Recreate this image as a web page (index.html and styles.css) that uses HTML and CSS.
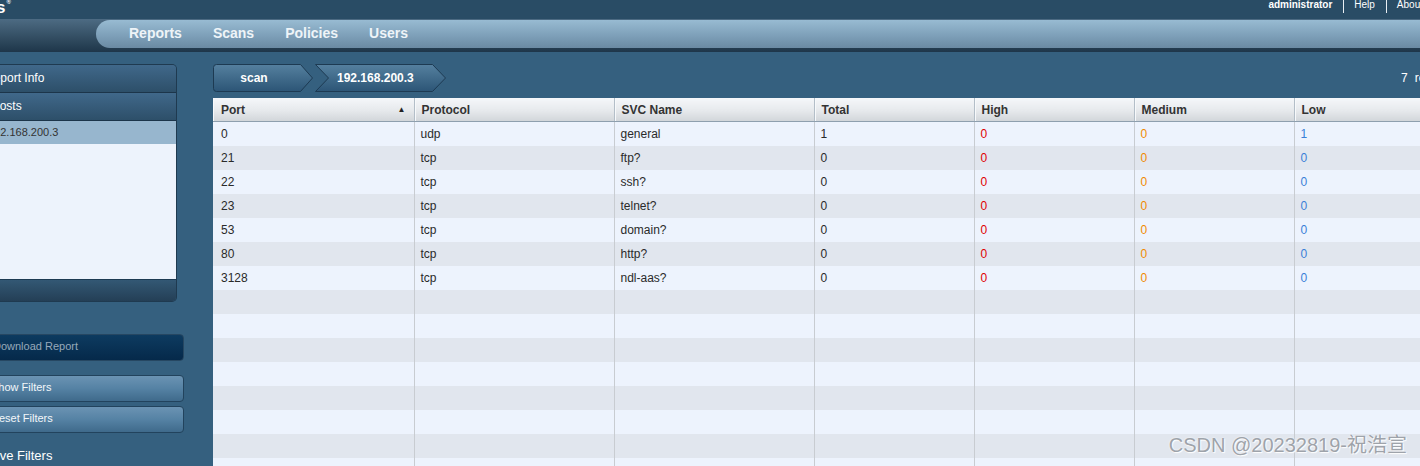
FILE: index.html
```html
<!DOCTYPE html>
<html>
<head>
<meta charset="utf-8">
<link rel="stylesheet" href="styles.css">
</head>
<body>
<header class="topbar">
  <div class="logo">Nessus<sup>®</sup></div>
  <nav class="user-links">
    <a class="ulink strong">administrator</a>
    <a class="ulink sep">Help</a>
    <a class="ulink sep">About</a>
  </nav>
</header>
<div class="navbar">
  <div class="nav-left"></div>
  <div class="nav-pill">
    <a class="nav-item">Reports</a>
    <a class="nav-item">Scans</a>
    <a class="nav-item">Policies</a>
    <a class="nav-item">Users</a>
  </div>
</div>
<main class="page">
  <aside class="sidebar">
    <div class="panel">
      <div class="panel-head first">Report Info</div>
      <div class="panel-head hosts">Hosts</div>
      <div class="host-row selected">192.168.200.3</div>
      <div class="host-list"></div>
      <div class="panel-foot"></div>
    </div>
    <button class="btn btn-dark">Download Report</button>
    <button class="btn btn-light first-light">Show Filters</button>
    <button class="btn btn-light">Reset Filters</button>
    <div class="active-filters">Active Filters</div>
  </aside>
  <section class="content">
    <div class="crumbs">
      <div class="crumb crumb-first">
        <svg class="crumb-shape" width="100" height="28" viewBox="0 0 100 28">
          <defs><linearGradient id="cg1" x1="0" y1="0" x2="0" y2="1"><stop offset="0" stop-color="#55809f"/><stop offset="1" stop-color="#2c5576"/></linearGradient></defs>
          <path d="M3.5,0.5 H87.5 L99.5,14 L87.5,27.5 H3.5 Q0.5,27.5 0.5,24.5 V3.5 Q0.5,0.5 3.5,0.5 Z" fill="url(#cg1)" stroke="#1d3a52"/>
        </svg>
        <span class="crumb-label">scan</span>
      </div>
      <div class="crumb crumb-second">
        <svg class="crumb-shape" width="131" height="28" viewBox="0 0 131 28">
          <defs><linearGradient id="cg2" x1="0" y1="0" x2="0" y2="1"><stop offset="0" stop-color="#55809f"/><stop offset="1" stop-color="#2c5576"/></linearGradient></defs>
          <path d="M0.5,0.5 H117.5 L130.5,14 L117.5,27.5 H0.5 L13.5,14 Z" fill="url(#cg2)" stroke="#1d3a52"/>
        </svg>
        <span class="crumb-label">192.168.200.3</span>
      </div>
      <div class="count"><span>7</span><span>results</span></div>
    </div>
    <table class="grid">
      <colgroup>
        <col class="c-port"><col class="c-proto"><col class="c-svc"><col class="c-num"><col class="c-num"><col class="c-num"><col class="c-last">
      </colgroup>
      <thead>
        <tr><th><span>Port</span><span class="sort">▲</span></th><th>Protocol</th><th>SVC Name</th><th>Total</th><th>High</th><th>Medium</th><th>Low</th></tr>
      </thead>
      <tbody>
        <tr><td>0</td><td>udp</td><td>general</td><td>1</td><td class="high">0</td><td class="med">0</td><td class="low">1</td></tr>
        <tr><td>21</td><td>tcp</td><td>ftp?</td><td>0</td><td class="high">0</td><td class="med">0</td><td class="low">0</td></tr>
        <tr><td>22</td><td>tcp</td><td>ssh?</td><td>0</td><td class="high">0</td><td class="med">0</td><td class="low">0</td></tr>
        <tr><td>23</td><td>tcp</td><td>telnet?</td><td>0</td><td class="high">0</td><td class="med">0</td><td class="low">0</td></tr>
        <tr><td>53</td><td>tcp</td><td>domain?</td><td>0</td><td class="high">0</td><td class="med">0</td><td class="low">0</td></tr>
        <tr><td>80</td><td>tcp</td><td>http?</td><td>0</td><td class="high">0</td><td class="med">0</td><td class="low">0</td></tr>
        <tr><td>3128</td><td>tcp</td><td>ndl-aas?</td><td>0</td><td class="high">0</td><td class="med">0</td><td class="low">0</td></tr>
        <tr><td></td><td></td><td></td><td></td><td></td><td></td><td></td></tr>
        <tr><td></td><td></td><td></td><td></td><td></td><td></td><td></td></tr>
        <tr><td></td><td></td><td></td><td></td><td></td><td></td><td></td></tr>
        <tr><td></td><td></td><td></td><td></td><td></td><td></td><td></td></tr>
        <tr><td></td><td></td><td></td><td></td><td></td><td></td><td></td></tr>
        <tr><td></td><td></td><td></td><td></td><td></td><td></td><td></td></tr>
        <tr><td></td><td></td><td></td><td></td><td></td><td></td><td></td></tr>
        <tr><td></td><td></td><td></td><td></td><td></td><td></td><td></td></tr>
      </tbody>
    </table>
  </section>
</main>
<div class="watermark">CSDN @20232819-祝浩宣</div>
</body>
</html>
```
FILE: styles.css
```css
html, body {
  margin: 0;
  padding: 0;
}
body {
  width: 1420px;
  height: 466px;
  overflow: hidden;
  background: #35607f;
  font-family: "Liberation Sans", Arial, sans-serif;
  position: relative;
}
.topbar {
  height: 19px;
  background: #294c65;
  display: flex;
  justify-content: space-between;
  align-items: flex-start;
  overflow: hidden;
}
.logo {
  color: #ffffff;
  font-weight: bold;
  font-size: 17px;
  line-height: 17px;
  margin-top: -6px;
  margin-left: -55px;
  white-space: nowrap;
}
.logo sup {
  font-size: 6px;
  vertical-align: 9px;
  margin-left: 1px;
}
.user-links {
  display: flex;
  margin-right: -14px;
}
.ulink {
  color: #ffffff;
  font-size: 10px;
  height: 9px;
  line-height: 9px;
  padding: 0 11px 4px 11px;
  white-space: nowrap;
}
.ulink.strong {
  font-weight: bold;
  padding-left: 0;
}
.ulink.sep {
  border-left: 1px solid #e8eef3;
  padding-left: 10px;
}
.navbar {
  height: 33px;
  display: flex;
  background: linear-gradient(#4d6b83, #2c465a 70%, #1e364a);
}
.nav-left {
  width: 96px;
  flex-shrink: 0;
}
.nav-pill {
  flex: 1;
  margin-top: 1px;
  height: 28px;
  border-radius: 15px 0 0 15px;
  background: linear-gradient(#98bbd2, #7ea0b9 55%, #6a8aa3);
  display: flex;
  align-items: center;
  padding-left: 33px;
  gap: 31px;
}
.nav-item {
  color: #eef4f8;
  font-weight: bold;
  font-size: 14px;
  line-height: 16px;
  margin-top: -3px;
}
.page {
  display: flex;
  padding-top: 12px;
}
.sidebar {
  width: 214px;
  margin-left: -30px;
  flex-shrink: 0;
  display: flex;
  flex-direction: column;
}
.panel {
  width: 206px;
  border: 1px solid #1f3a50;
  border-left: none;
  border-radius: 0 5px 5px 0;
  overflow: hidden;
  height: 236px;
  display: flex;
  flex-direction: column;
}
.panel-head {
  height: 27px;
  line-height: 27px;
  color: #ffffff;
  font-size: 12px;
  background: linear-gradient(#40688a, #2d4f69);
  padding-left: 15px;
  border-bottom: 1px solid #1c354a;
}
.panel-head.hosts {
  padding-left: 21px;
}
.host-row {
  height: 23px;
  line-height: 22px;
  font-size: 11px;
  color: #333333;
  background: #97b6ce;
  padding-left: 18px;
}
.host-list {
  flex: 1;
  background: #edf3fc;
}
.panel-foot {
  height: 21px;
  border-top: 1px solid #1d3a52;
  background: linear-gradient(#335874, #243f56);
}
.btn {
  display: block;
  width: 214px;
  height: 27px;
  text-align: left;
  font-family: "Liberation Sans", Arial, sans-serif;
  font-size: 11px;
  line-height: 13px;
  border-radius: 0 4px 4px 0;
  margin: 0;
  padding: 0 0 3px 22px;
}
.btn-dark {
  margin-top: 32px;
  background: linear-gradient(#0d3b60, #05294a);
  border: 1px solid #264762;
  color: #97a9ba;
}
.btn-light {
  margin-top: 4px;
  background: linear-gradient(#6b93b3, #5582a4 50%, #3f6a8b);
  border: 1px solid #22435d;
  color: #f3f7fa;
  padding-left: 20px;
}
.btn-light.first-light {
  margin-top: 14px;
}
.active-filters {
  margin-top: 15px;
  color: #ffffff;
  font-size: 13px;
  padding-left: 8px;
}
.content {
  width: 1260px;
  flex-shrink: 0;
  margin-left: 29px;
}
.crumbs {
  height: 28px;
  display: flex;
  align-items: center;
}
.crumb {
  position: relative;
  height: 28px;
  display: flex;
  align-items: center;
}
.crumb-shape {
  position: absolute;
  left: 0;
  top: 0;
}
.crumb-first {
  width: 100px;
}
.crumb-second {
  width: 131px;
  margin-left: 2px;
}
.crumb-label {
  position: relative;
  color: #ffffff;
  font-weight: bold;
  font-size: 12px;
}
.crumb-first .crumb-label {
  width: 82px;
  text-align: center;
}
.crumb-second .crumb-label {
  padding-left: 22px;
}
.count {
  margin-left: auto;
  margin-right: 20px;
  color: #ffffff;
  font-size: 12px;
  display: flex;
  gap: 7px;
  width: 52px;
}
.grid {
  margin-top: 6px;
  width: 1260px;
  border-collapse: collapse;
  table-layout: fixed;
  font-size: 12px;
  color: #333333;
}
.c-port { width: 201px; }
.c-proto { width: 200px; }
.c-svc { width: 200px; }
.c-num { width: 160px; }
.c-last { width: 179px; }
.grid th {
  height: 23px;
  padding: 0 0 0 7px;
  text-align: left;
  font-weight: bold;
  color: #333333;
  background: linear-gradient(#f5f7fa, #e6e9ec 55%, #d2d6da);
  border-bottom: 1px solid #8e9fae;
  border-left: 1px solid #b3bec8;
  box-shadow: inset 1px 0 0 #f7f9fb;
}
.grid th:first-child {
  border-left: none;
  padding-left: 8px;
}
.grid th .sort {
  float: right;
  font-size: 8px;
  margin-right: 8px;
  margin-top: 2px;
  color: #222222;
}
.grid td {
  height: 24px;
  padding: 0 0 0 6px;
  border-left: 1px solid #c8ccd1;
  white-space: nowrap;
  color: #2a2a2a;
}
.grid td:first-child {
  border-left: none;
  padding-left: 8px;
}
.grid tbody tr:nth-child(odd) td {
  background: #edf3fd;
}
.grid tbody tr:nth-child(even) td {
  background: #e1e6ee;
}
.grid td.high { color: #e00000; }
.grid td.med { color: #f08a00; }
.grid td.low { color: #3a7fd8; }
.watermark {
  position: absolute;
  right: 13px;
  bottom: 8px;
  font-size: 20px;
  color: #9ea3aa;
  text-shadow: 0 0 2px #ffffff, 1px 1px 1px #ffffff;
  font-family: "Liberation Sans", "Noto Sans CJK SC", sans-serif;
  white-space: nowrap;
}
```
